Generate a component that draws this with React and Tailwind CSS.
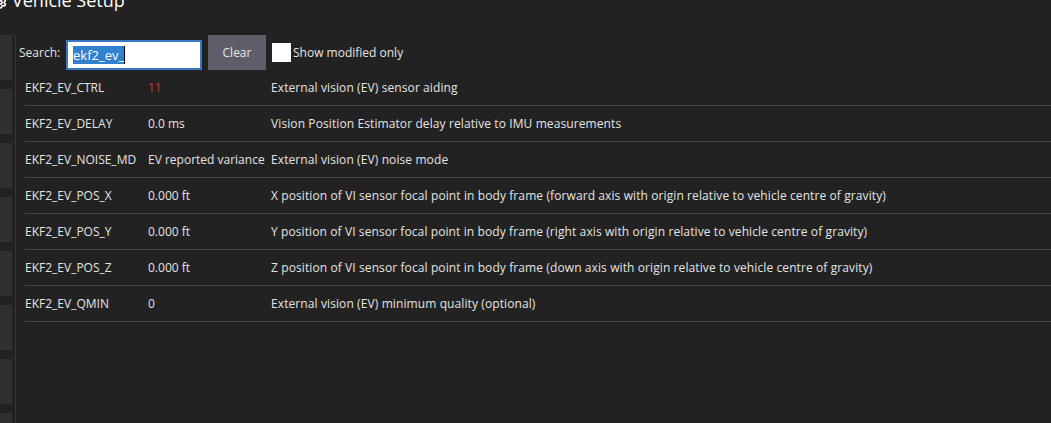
import { Settings } from 'lucide-react'

const params = [
  { name: 'EKF2_EV_CTRL', value: '11', desc: 'External vision (EV) sensor aiding', modified: true },
  { name: 'EKF2_EV_DELAY', value: '0.0 ms', desc: 'Vision Position Estimator delay relative to IMU measurements' },
  { name: 'EKF2_EV_NOISE_MD', value: 'EV reported variance', desc: 'External vision (EV) noise mode' },
  { name: 'EKF2_EV_POS_X', value: '0.000 ft', desc: 'X position of VI sensor focal point in body frame (forward axis with origin relative to vehicle centre of gravity)' },
  { name: 'EKF2_EV_POS_Y', value: '0.000 ft', desc: 'Y position of VI sensor focal point in body frame (right axis with origin relative to vehicle centre of gravity)' },
  { name: 'EKF2_EV_POS_Z', value: '0.000 ft', desc: 'Z position of VI sensor focal point in body frame (down axis with origin relative to vehicle centre of gravity)' },
  { name: 'EKF2_EV_QMIN', value: '0', desc: 'External vision (EV) minimum quality (optional)' },
]

export default function App() {
  return (
    <div className="w-[1051px] h-[423px] overflow-hidden bg-[#222222] text-[#e4e4e4] text-[12px] font-['Open_Sans',sans-serif]">
      {/* Title */}
      <div className="flex items-center gap-[5px] h-[20px] mt-[-10px] text-white text-[18px] leading-none">
        <Settings className="w-[13px] h-[13px] ml-[-6px] mt-[4px]" strokeWidth={3} />
        <span>Vehicle Setup</span>
      </div>

      <div className="flex mt-[25px]">
        {/* Sidebar */}
        <div className="w-[12px] flex flex-col gap-[9px] shrink-0">
          {Array.from({ length: 8 }).map((_, i) => (
            <div key={i} className="h-[45px] bg-[#303030]" />
          ))}
        </div>
        <div className="w-[1px] ml-[3px] bg-[#363636] h-[400px] shrink-0" />

        {/* Content */}
        <div className="flex-1 pl-[3px]">
          <div className="flex items-center h-[35px]">
            <span className="w-[47px]">Search:</span>
            <div className="w-[136px] h-[30px] mt-[4px] bg-white border-2 border-[#3b78c4] flex items-center px-[5px]">
              <span className="bg-[#3182ce] text-white text-[13px] leading-[18px] border-r border-black">ekf2_ev_</span>
            </div>
            <button className="ml-[6px] w-[58px] h-[35px] bg-[#5e5d6a] text-[#e8e8e8] text-[12px]">Clear</button>
            <div className="ml-[6px] w-[19px] h-[19px] bg-white" />
            <span className="ml-[2px]">Show modified only</span>
          </div>

          <div className="pl-[6px]">
            {params.map((p) => (
              <div key={p.name} className="flex items-center h-[36px] border-b border-[#444444] whitespace-nowrap">
                <span className="w-[123px] shrink-0">{p.name}</span>
                <span className={`w-[123px] shrink-0 ${p.modified ? 'text-[#c9403f]' : ''}`}>{p.value}</span>
                <span className="tracking-[0.1px]">{p.desc}</span>
              </div>
            ))}
          </div>
        </div>
      </div>
    </div>
  )
}
